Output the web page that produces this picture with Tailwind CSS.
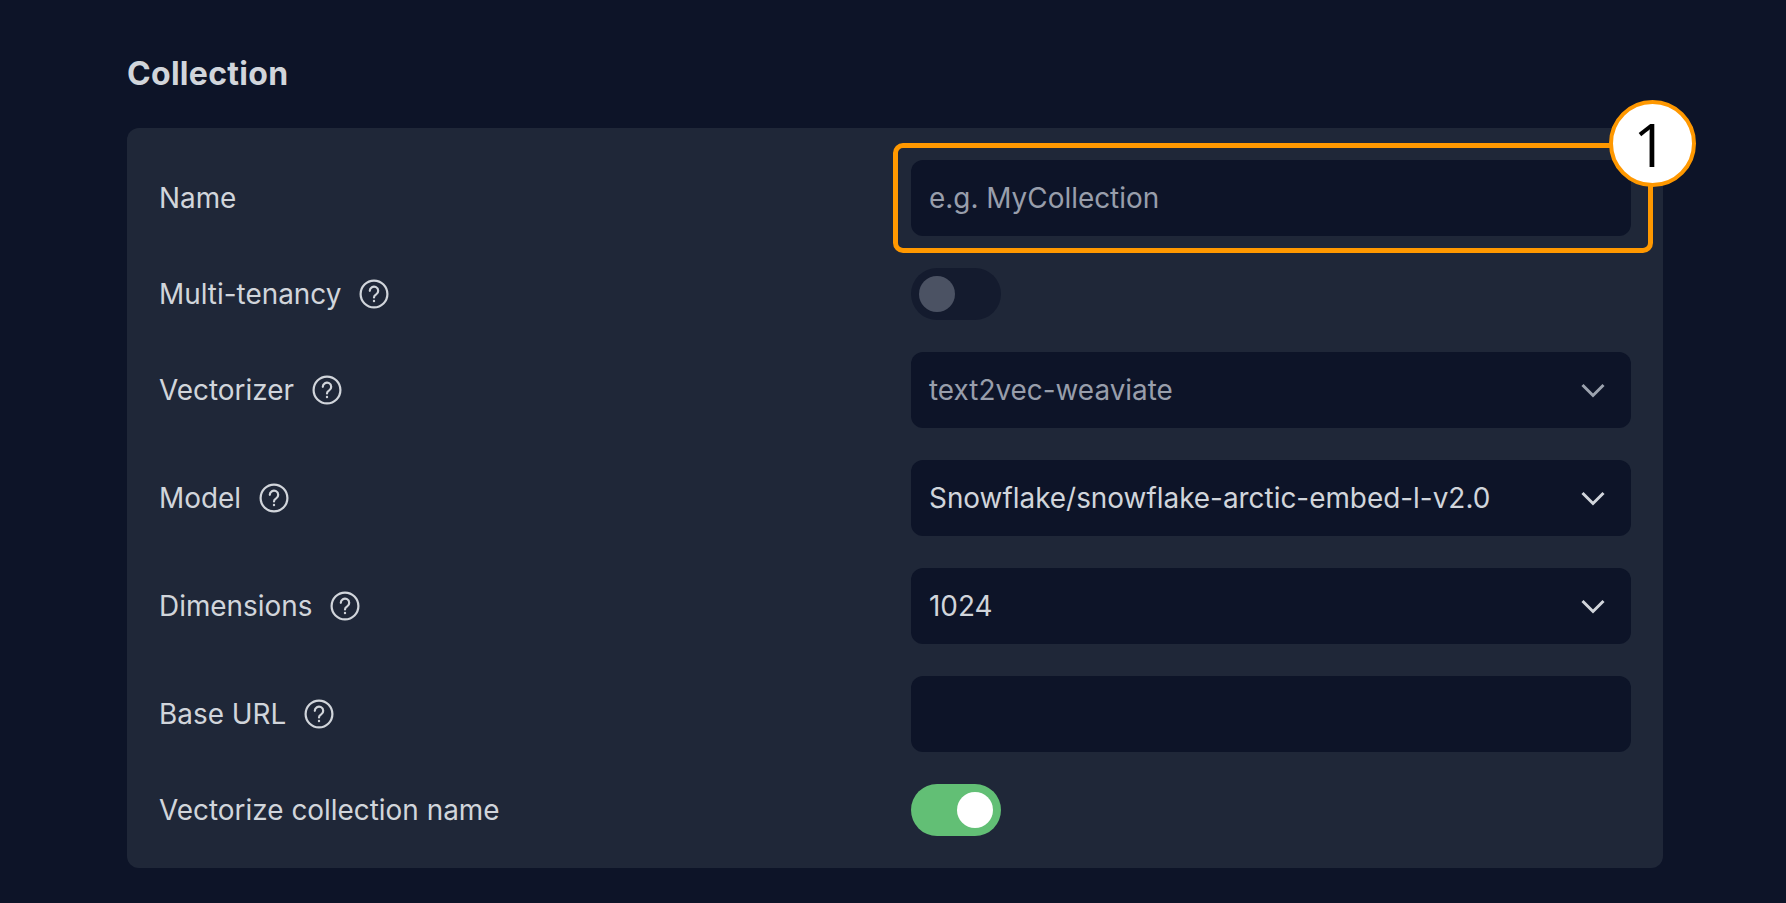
<!DOCTYPE html>
<html lang="en">
<head>
    <meta charset="UTF-8">
    <title>Collection</title>
    <script src="https://cdn.jsdelivr.net/npm/@tailwindcss/browser@4"></script>
</head>
<body class="bg-[#0d1428] min-h-screen font-[Inter,sans-serif] overflow-hidden">

    <main class="pl-[127px] pr-[123px] pt-[53px]">
        <h2 class="text-[32px] leading-[42px] font-bold tracking-[0.3px] text-[#d1d5db] mb-[33px]">Collection</h2>

        <section class="relative bg-[#1f2738] rounded-xl p-8 grid grid-cols-[720px_720px] gap-x-8 gap-y-8 items-center text-[27.9px] leading-[42px] text-[#d1d5db]">

            <label class="flex items-center gap-[18px]">Name</label>
            <input type="text" placeholder="e.g. MyCollection" class="h-[76px] w-full rounded-xl bg-[#0d1428] px-[18px] placeholder:text-[#989eab] outline-none">

            <label class="flex items-center gap-[18px]">
                Multi-tenancy
                <svg class="w-[30px] h-[30px] text-[#d1d5db]" viewBox="0 0 30 30" fill="none" stroke="currentColor" stroke-width="2.2" stroke-linecap="round"><circle cx="15" cy="15" r="13.4"/><path d="M10.8 11.8a4.2 4.2 0 1 1 6.4 3.6c-1.3.8-2.2 1.6-2.2 3"/><circle cx="15" cy="22" r=".5" fill="currentColor" stroke-width="1.4"/></svg>
            </label>
            <div class="h-[52px] w-[90px] rounded-full bg-[#141b2e] flex items-center pl-2">
                <span class="w-9 h-9 rounded-full bg-[#4b5263]"></span>
            </div>

            <label class="flex items-center gap-[18px]">
                Vectorizer
                <svg class="w-[30px] h-[30px] text-[#d1d5db]" viewBox="0 0 30 30" fill="none" stroke="currentColor" stroke-width="2.2" stroke-linecap="round"><circle cx="15" cy="15" r="13.4"/><path d="M10.8 11.8a4.2 4.2 0 1 1 6.4 3.6c-1.3.8-2.2 1.6-2.2 3"/><circle cx="15" cy="22" r=".5" fill="currentColor" stroke-width="1.4"/></svg>
            </label>
            <div class="h-[76px] rounded-xl bg-[#0d1428] pl-[18px] pr-[26px] flex items-center justify-between text-[#989eab]">
                text2vec-weaviate
                <svg class="w-[24px] h-[15px] text-[#9ca3af]" viewBox="0 0 24 15" fill="none" stroke="currentColor" stroke-width="3"><path d="M1.5 2 12 12.5 22.5 2"/></svg>
            </div>

            <label class="flex items-center gap-[18px]">
                Model
                <svg class="w-[30px] h-[30px] text-[#d1d5db]" viewBox="0 0 30 30" fill="none" stroke="currentColor" stroke-width="2.2" stroke-linecap="round"><circle cx="15" cy="15" r="13.4"/><path d="M10.8 11.8a4.2 4.2 0 1 1 6.4 3.6c-1.3.8-2.2 1.6-2.2 3"/><circle cx="15" cy="22" r=".5" fill="currentColor" stroke-width="1.4"/></svg>
            </label>
            <div class="h-[76px] rounded-xl bg-[#0d1428] pl-[18px] pr-[26px] flex items-center justify-between">
                Snowflake/snowflake-arctic-embed-l-v2.0
                <svg class="w-[24px] h-[15px] text-[#d1d5db]" viewBox="0 0 24 15" fill="none" stroke="currentColor" stroke-width="3"><path d="M1.5 2 12 12.5 22.5 2"/></svg>
            </div>

            <label class="flex items-center gap-[18px]">
                Dimensions
                <svg class="w-[30px] h-[30px] text-[#d1d5db]" viewBox="0 0 30 30" fill="none" stroke="currentColor" stroke-width="2.2" stroke-linecap="round"><circle cx="15" cy="15" r="13.4"/><path d="M10.8 11.8a4.2 4.2 0 1 1 6.4 3.6c-1.3.8-2.2 1.6-2.2 3"/><circle cx="15" cy="22" r=".5" fill="currentColor" stroke-width="1.4"/></svg>
            </label>
            <div class="h-[76px] rounded-xl bg-[#0d1428] pl-[18px] pr-[26px] flex items-center justify-between">
                1024
                <svg class="w-[24px] h-[15px] text-[#d1d5db]" viewBox="0 0 24 15" fill="none" stroke="currentColor" stroke-width="3"><path d="M1.5 2 12 12.5 22.5 2"/></svg>
            </div>

            <label class="flex items-center gap-[18px]">
                Base URL
                <svg class="w-[30px] h-[30px] text-[#d1d5db]" viewBox="0 0 30 30" fill="none" stroke="currentColor" stroke-width="2.2" stroke-linecap="round"><circle cx="15" cy="15" r="13.4"/><path d="M10.8 11.8a4.2 4.2 0 1 1 6.4 3.6c-1.3.8-2.2 1.6-2.2 3"/><circle cx="15" cy="22" r=".5" fill="currentColor" stroke-width="1.4"/></svg>
            </label>
            <input type="text" class="h-[76px] w-full rounded-xl bg-[#0d1428] px-[18px] outline-none">

            <label class="flex items-center gap-[18px]">Vectorize collection name</label>
            <div class="h-[52px] w-[90px] rounded-full bg-[#62bf75] flex items-center justify-end pr-2">
                <span class="w-9 h-9 rounded-full bg-white"></span>
            </div>

            <!-- callout over the name field -->
            <div class="absolute left-[766px] top-[15px] w-[760px] h-[110px] border-[5px] border-[#ff9800] rounded-[10px]"></div>
            <div class="absolute left-[1482px] top-[-28px] w-[87px] h-[87px] pr-1 rounded-full bg-white border-4 border-[#ff9800] flex items-center justify-center text-black text-[60px] leading-none font-['Open_Sans',sans-serif]">1</div>
        </section>
    </main>

</body>
</html>
